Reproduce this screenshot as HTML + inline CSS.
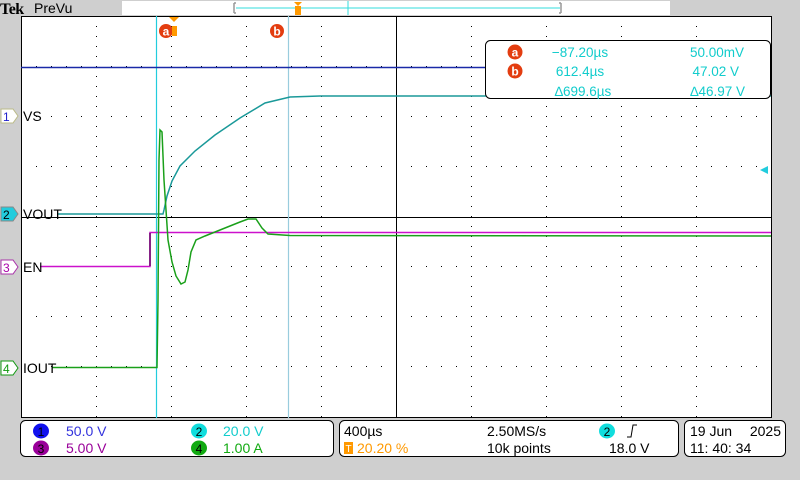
<!DOCTYPE html>
<html><head><meta charset="utf-8"><style>
html,body{margin:0;padding:0;background:#cfcfcf;width:800px;height:480px;overflow:hidden;font-family:"Liberation Sans",sans-serif}
svg{position:absolute;left:0;top:0}
</style></head><body>
<svg width="800" height="480" xmlns="http://www.w3.org/2000/svg" font-family="Liberation Sans, sans-serif">
<rect x="0" y="0" width="800" height="480" fill="#cfcfcf"/>
<!-- top bar -->
<text x="0" y="14" font-size="16" font-weight="bold" font-family="Liberation Serif, serif" letter-spacing="-0.5">Tek</text>
<text x="34" y="13" font-size="14">PreVu</text>
<rect x="122" y="1" width="548" height="14" fill="#fff"/>
<path d="M234 3 V13 M234 3 H236 M234 13 H236 M561 3 V13 M559 3 H561 M559 13 H561" stroke="#999" stroke-width="1.5" fill="none"/>
<line x1="236" y1="8" x2="560" y2="8" stroke="#3dd" stroke-width="1"/>
<line x1="348" y1="1" x2="348" y2="15" stroke="#3dd"/>
<rect x="295" y="6" width="6" height="9" fill="#f90"/>
<path d="M294 2 H302 L298 6 Z" fill="#f90"/>
<!-- plot area -->
<rect x="21" y="16" width="751" height="402" fill="#fff"/>
<g stroke="#000" stroke-width="1" stroke-dasharray="1 9">
<line x1="96.5" y1="16" x2="96.5" y2="418"/><line x1="171.5" y1="16" x2="171.5" y2="418"/><line x1="246.5" y1="16" x2="246.5" y2="418"/><line x1="321.5" y1="16" x2="321.5" y2="418"/>
<line x1="471.5" y1="16" x2="471.5" y2="418"/><line x1="546.5" y1="16" x2="546.5" y2="418"/><line x1="621.5" y1="16" x2="621.5" y2="418"/><line x1="696.5" y1="16" x2="696.5" y2="418"/>
</g>
<g stroke="#000" stroke-width="1" stroke-dasharray="1 14">
<line x1="21" y1="66.5" x2="772" y2="66.5"/><line x1="21" y1="116.5" x2="772" y2="116.5"/><line x1="21" y1="166.5" x2="772" y2="166.5"/>
<line x1="21" y1="266.5" x2="772" y2="266.5"/><line x1="21" y1="316.5" x2="772" y2="316.5"/><line x1="21" y1="366.5" x2="772" y2="366.5"/>
</g>
<line x1="396.5" y1="16" x2="396.5" y2="418" stroke="#000"/>
<line x1="21" y1="217.5" x2="772" y2="217.5" stroke="#000"/>
<rect x="21.5" y="16.5" width="750" height="401" fill="none" stroke="#000"/>
<!-- cursors -->
<line x1="156.5" y1="16" x2="156.5" y2="418" stroke="#2cd" stroke-width="1.2"/>
<line x1="288.5" y1="16" x2="288.5" y2="418" stroke="#9cd" stroke-width="1.2"/>
<!-- waveforms -->
<polyline points="21,67.5 771,67.5" stroke="#1a2aa8" stroke-width="1.5" fill="none"/>
<polyline points="58,214 163,214 164,210 167,196 172,181 180,166 195,151 215,135 240,118 265,103 290,97 320,96 771,96" stroke="#1a9999" stroke-width="1.5" fill="none"/>
<polyline points="40,266.5 150,266.5 150,232.5 771,232.5" stroke="#c1c" stroke-width="1.5" fill="none"/>
<polyline points="150,233 150,266" stroke="#606" stroke-width="1.5" fill="none"/>
<polyline points="52,367.5 157,367.5 158,300 159,160 160,130 162,132 164,180 168,240 172,262 176,276 181,284 185,282 188,270 191,252 196,240 205,236 215,232 240,222 248,219 256,219 262,228 268,234 290,235.5 771,236" stroke="#1aa01a" stroke-width="1.5" fill="none"/>
<!-- cursor markers -->
<circle cx="166" cy="31" r="7" fill="#e33d10"/><text x="166" y="35.5" font-size="12" font-weight="bold" fill="#fff" text-anchor="middle">a</text>
<rect x="172" y="26" width="5" height="10" fill="#f90"/><path d="M169 17 H179 L174 22 Z" fill="#f90"/>
<circle cx="277" cy="31" r="7" fill="#e33d10"/><text x="277" y="35.5" font-size="12" font-weight="bold" fill="#fff" text-anchor="middle">b</text>
<!-- trigger level arrow -->
<path d="M760 170 L768 166 L768 174 Z" fill="#2cd"/>
<!-- channel labels -->
<g font-size="14">
<path d="M1 109 H13 L18 116 L13 123 H1 Z" fill="#fff" stroke="#bb8"/><text x="3" y="121" fill="#22c" font-size="12">1</text><text x="23" y="121">VS</text>
<path d="M1 207 H13 L18 214 L13 221 H1 Z" fill="#2cd" stroke="#888"/><text x="3" y="219" fill="#000" font-size="12">2</text><text x="23" y="219">VOUT</text>
<path d="M1 260 H13 L18 267 L13 274 H1 Z" fill="#fff" stroke="#a3a"/><text x="3" y="272" fill="#a0a" font-size="12">3</text><text x="23" y="272">EN</text>
<path d="M1 361 H13 L18 368 L13 375 H1 Z" fill="#fff" stroke="#191"/><text x="3" y="373" fill="#191" font-size="12">4</text><text x="23" y="373">IOUT</text>
</g>
<!-- readout box -->
<rect x="485.5" y="40.5" width="285" height="58" rx="5" fill="#fff" stroke="#000"/>
<g font-size="13.5" fill="#1cc">
<circle cx="515" cy="52" r="7.5" fill="#e33d10"/><text x="515" y="56.5" font-size="12" font-weight="bold" fill="#fff" text-anchor="middle">a</text>
<circle cx="515" cy="71" r="7.5" fill="#e33d10"/><text x="515" y="75.5" font-size="12" font-weight="bold" fill="#fff" text-anchor="middle">b</text>
<text x="580" y="57" text-anchor="middle">−87.20µs</text>
<text x="580" y="76" text-anchor="middle">612.4µs</text>
<text x="583" y="96" text-anchor="middle">∆699.6µs</text>
<text x="744" y="57" text-anchor="end">50.00mV</text>
<text x="739" y="76" text-anchor="end">47.02 V</text>
<text x="745" y="96" text-anchor="end">∆46.97 V</text>
</g>
<!-- bottom boxes -->
<rect x="20.5" y="420.5" width="313" height="36" rx="5" fill="#fff" stroke="#000"/>
<rect x="339.5" y="420.5" width="339" height="36" rx="5" fill="#fff" stroke="#000"/>
<rect x="684.5" y="420.5" width="101" height="36" rx="5" fill="#fff" stroke="#000"/>
<g font-size="14">
<ellipse cx="41" cy="431" rx="8" ry="7.5" fill="#1111ee"/><text x="41" y="436" text-anchor="middle" fill="#000" font-size="12">1</text>
<text x="66" y="436" fill="#33d">50.0 V</text>
<ellipse cx="41" cy="448" rx="8" ry="7.5" fill="#909"/><text x="41" y="453" text-anchor="middle" fill="#000" font-size="12">3</text>
<text x="66" y="453" fill="#909">5.00 V</text>
<ellipse cx="199" cy="431" rx="8" ry="7.5" fill="#1dd"/><text x="199" y="436" text-anchor="middle" fill="#000" font-size="12">2</text>
<text x="223" y="436" fill="#1cc">20.0 V</text>
<ellipse cx="199" cy="448" rx="8" ry="7.5" fill="#1a1"/><text x="199" y="453" text-anchor="middle" fill="#000" font-size="12">4</text>
<text x="223" y="453" fill="#1a1">1.00 A</text>
<text x="344" y="436">400µs</text>
<rect x="344" y="442" width="9" height="12" fill="#f90"/><text x="348.5" y="452" font-size="10" fill="#fff" text-anchor="middle">T</text>
<text x="357" y="453" fill="#f90">20.20 %</text>
<text x="487" y="436">2.50MS/s</text>
<text x="487" y="453">10k points</text>
<ellipse cx="607" cy="431" rx="8" ry="7.5" fill="#1dd"/><text x="607" y="436" text-anchor="middle" fill="#000" font-size="12">2</text>
<path d="M627 437 L631 437 L633 425 L637 425" stroke="#000" fill="none"/>
<text x="609" y="453">18.0 V</text>
<text x="690" y="436">19 Jun</text><text x="781" y="436" text-anchor="end">2025</text>
<text x="690" y="453">11: 40: 34</text>
</g>
</svg>
</body></html>
